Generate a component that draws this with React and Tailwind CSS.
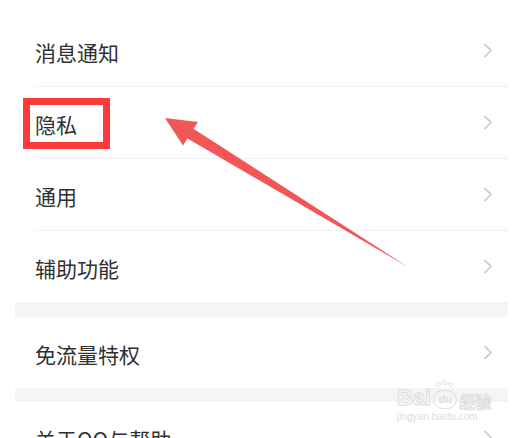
import React from "react";

const Chevron = () => (
  <svg width="10" height="15" viewBox="0 0 10 15" fill="none">
    <path d="M2 1.5 L8 7.5 L2 13.5" stroke="#c4c4c8" strokeWidth="1.6" strokeLinecap="round" strokeLinejoin="round" />
  </svg>
);

const Row = ({ label, border, h }) => (
  <div className={"ml-5 flex items-center justify-between pr-[15px] " + (h || "h-[71px]") + (border ? " border-b border-[#f0f0f2]" : "")}>
    <span className="pt-[3px] text-[21px] leading-none text-[#303033]">{label}</span>
    <Chevron />
  </div>
);

export default function App() {
  return (
    <div
      className="relative h-[438px] w-[518px] overflow-hidden bg-white"
      style={{ fontFamily: '"Noto Sans CJK SC", "Noto Sans", sans-serif' }}
    >
      <div className="ml-[15px] mr-[10px] pt-[15px]">
        <div className="flex flex-col">
          <Row label="消息通知" border h="h-[72px]" />
          <Row label="隐私" border h="h-[72px]" />
          <Row label="通用" border h="h-[72px]" />
          <Row label="辅助功能" />
        </div>
        <div className="h-[15px] bg-[#f4f5f7]" />
        <Row label="免流量特权" />
        <div className="h-[14px] bg-[#f4f5f7]" />
        <Row label="关于QQ与帮助" />
      </div>

      {/* red highlight box */}
      <div className="absolute left-[23px] top-[98px] h-[51px] w-[87px] border-[7px] border-[#fb3b3b]" />

      {/* arrow */}
      <svg className="absolute left-0 top-0" width="518" height="438" viewBox="0 0 518 438">
        <polygon
          points="165,118 198,122 193.5,128.8 408,267 187.5,138.6 183,145.5"
          fill="#f25757"
        />
      </svg>

      {/* watermark */}
      <div className="absolute left-[397px] top-[382px] flex flex-col items-start">
        <div className="flex items-end gap-[2px]">
          <span
            className="text-[22px] font-bold leading-none text-transparent [-webkit-text-stroke:1px_#dcdde0]"
            style={{ fontFamily: '"Liberation Sans", sans-serif' }}
          >
            Bai
          </span>
          <div className="relative h-[27px] w-[24px]">
            <div className="absolute left-[3px] top-0 h-[5px] w-[5px] rounded-full border border-[#dcdde0]" />
            <div className="absolute left-[9px] top-[-2px] h-[5px] w-[5px] rounded-full border border-[#dcdde0]" />
            <div className="absolute left-[15px] top-0 h-[5px] w-[5px] rounded-full border border-[#dcdde0]" />
            <div className="absolute bottom-0 left-0 flex h-[19px] w-[24px] items-center justify-center rounded-full border border-[#dcdde0]">
              <span className="text-[11px] font-bold leading-none text-[#dcdde0]" style={{ fontFamily: '"Liberation Sans", sans-serif' }}>du</span>
            </div>
          </div>
          <span className="text-[16px] font-bold leading-none text-transparent [-webkit-text-stroke:1px_#dcdde0]">经验</span>
        </div>
        <span
          className="mt-[3px] text-[10px] leading-none text-[#dcdde0]"
          style={{ fontFamily: '"Liberation Sans", sans-serif' }}
        >
          jingyan.baidu.com
        </span>
      </div>
    </div>
  );
}
